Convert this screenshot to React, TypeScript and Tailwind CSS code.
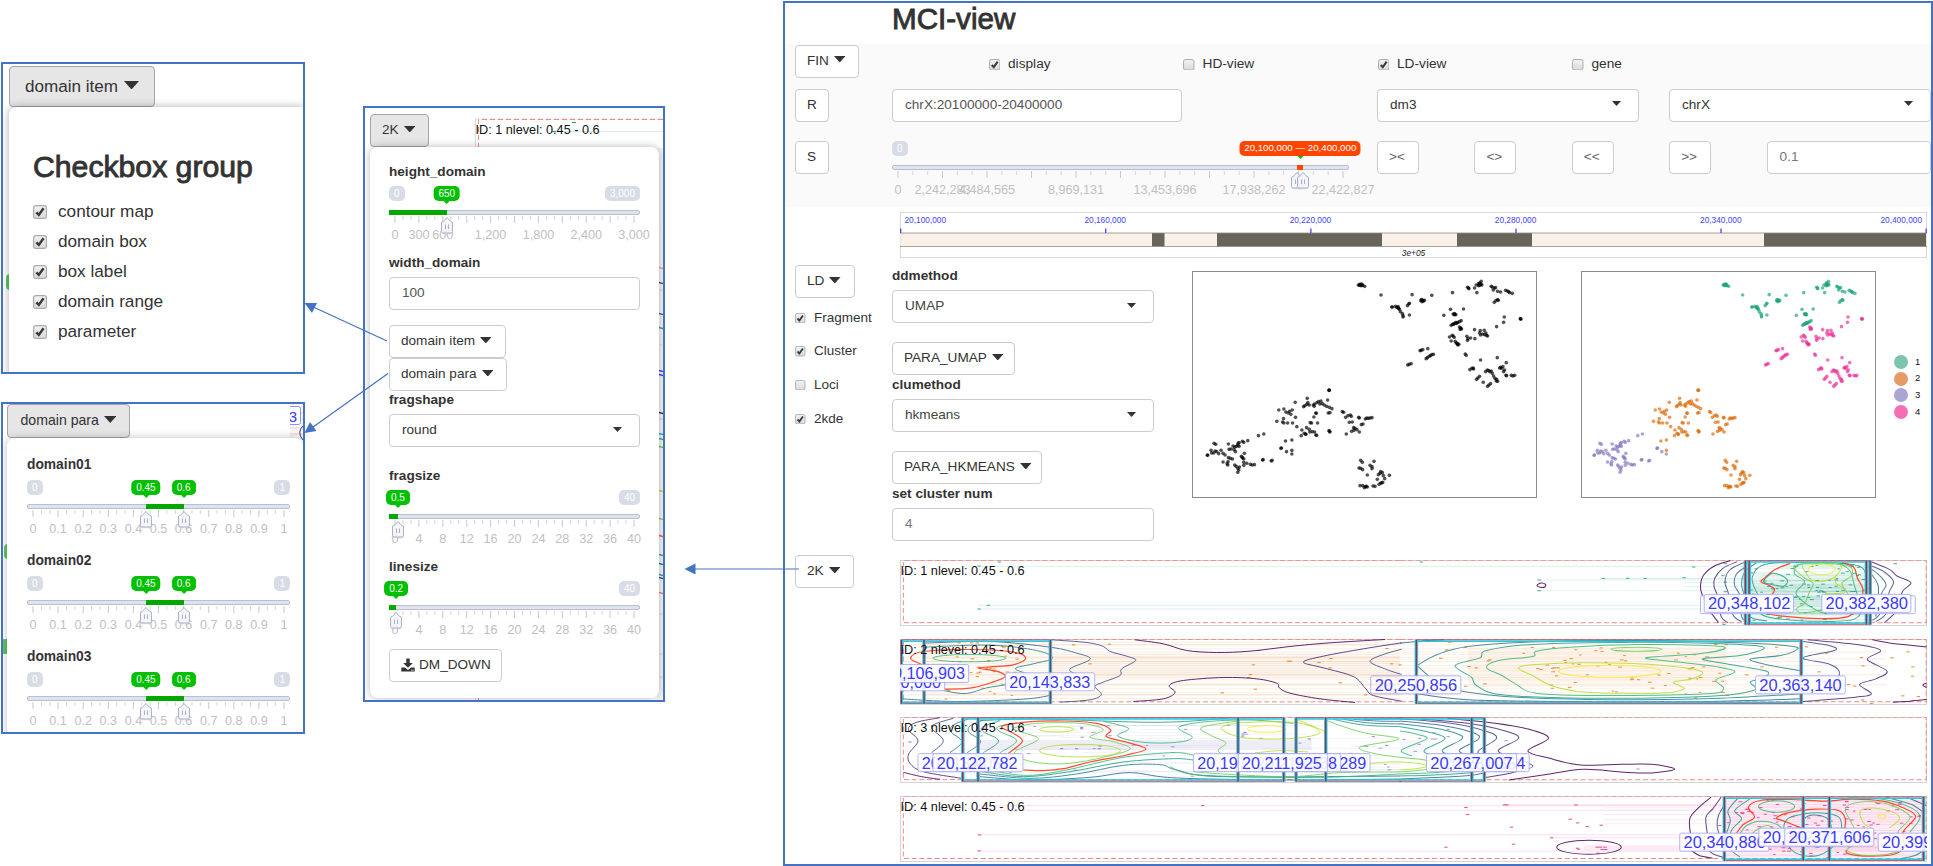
import React from "react";

type Pt = [number, number];

/* ---------- helpers ---------- */

const parse = (s: string): Pt[] =>
  s.trim().split(/\s+/).map((p) => p.split(",").map(Number) as Pt);

/* Catmull-Rom spline through the points */
function spline(s: string, closed = false): string {
  const p = parse(s);
  const n = p.length;
  const at = (i: number): Pt => (closed ? p[(i + n) % n] : p[Math.max(0, Math.min(n - 1, i))]);
  let d = `M${p[0][0]},${p[0][1]}`;
  for (let i = 0; i < (closed ? n : n - 1); i++) {
    const a = at(i - 1), b = at(i), c = at(i + 1), e = at(i + 2);
    d += `C${b[0] + (c[0] - a[0]) / 6},${b[1] + (c[1] - a[1]) / 6} ${c[0] - (e[0] - b[0]) / 6},${c[1] - (e[1] - b[1]) / 6} ${c[0]},${c[1]}`;
  }
  return closed ? d + "Z" : d;
}

function rng(seed: number) {
  let s = seed;
  return () => {
    s = (s * 16807) % 2147483647;
    return s / 2147483647;
  };
}

/* ---------- form parts ---------- */

function Caret({ w = 11.5, h = 6.5 }: { w?: number; h?: number }) {
  return (
    <svg width={w} height={h} viewBox="0 0 12 7" preserveAspectRatio="none" className="shrink-0">
      <path d="M0 0H12L6 7Z" fill="#333" />
    </svg>
  );
}

function Btn({ className = "", children, caret = false }: { className?: string; children: React.ReactNode; caret?: boolean }) {
  return (
    <button className={`flex h-[33px] shrink-0 items-center gap-[5px] rounded-[4px] border border-[#ccc] bg-white pl-[11px] text-[13.6px] whitespace-nowrap text-[#333] ${className}`}>
      <span>{children}</span>
      {caret && <span className="-mt-[3px] flex"><Caret /></span>}
    </button>
  );
}

function Field({ className = "", children, caret = false }: { className?: string; children: React.ReactNode; caret?: boolean }) {
  return (
    <div className={`flex h-[33px] shrink-0 items-center justify-between rounded-[4px] border border-[#ccc] bg-white pr-[17px] pl-[12px] text-[13.6px] ${className}`}>
      <span>{children}</span>
      {caret && <span className="-mt-[3px] flex"><Caret w={9} h={5} /></span>}
    </div>
  );
}

function Check({ on, size }: { on: boolean; size: number }) {
  return (
    <svg width={size} height={size} viewBox="0 0 13 13" className="shrink-0">
      <defs>
        <linearGradient id="cb" x1="0" y1="0" x2="0" y2="1">
          <stop offset="0" stopColor="#f2f2f2" />
          <stop offset="1" stopColor="#dadada" />
        </linearGradient>
      </defs>
      <rect x="0.6" y="0.6" width="11.8" height="11.8" rx="2" fill="url(#cb)" stroke="#acacac" strokeWidth="1.1" />
      {on && <path d="M3.1 6.8L5.4 9.2L9.8 3" fill="none" stroke="#3a3a3a" strokeWidth="2.3" />}
    </svg>
  );
}

interface SliderProps {
  width: number;
  max: string | null;
  min?: string | null;
  divisions: number;
  minor: number;
  labels: [number, string][];
  from?: number;
  to: number;
  bubbles: [number, string][];
  handles: number[];
  range?: boolean;
}

/* Range slider; every position is a fraction of the scale between the two end ticks */
function Slider({ width, max, min = "0", divisions, minor, labels, from = 0, to, bubbles, handles, range = false }: SliderProps) {
  const inset = 6;
  const px = (f: number) => inset + f * (width - inset * 2);
  const total = divisions * minor;
  const start = from === 0 ? 0 : px(from);
  const badge = "flex h-[15px] items-center rounded-[5px] bg-[#d8dce6] px-[5px] text-[10px] text-white";
  return (
    <div className="relative h-[58px] shrink-0" style={{ width }}>
      <div className="flex h-[15px] justify-between">
        <span className={min === null ? "invisible" : badge}>{min}</span>
        {max !== null && <span className={badge}>{max}</span>}
      </div>
      <div className="mt-[9px] h-[5px] overflow-hidden rounded-[2px] border border-[#b9c0d2] bg-[#dfe3ee]" />
      <div className={`absolute top-[24px] h-[5px] ${range ? "bg-[#ff4500]" : "bg-[#00a800]"}`} style={{ left: start, width: px(to) - start }} />
      <svg className="absolute top-[29px] left-0" width={width} height="9">
        {Array.from({ length: total + 1 }, (_, i) => {
          const major = i % minor === 0;
          return <rect key={i} x={px(i / total) - 0.5} y="1" width="1" height={major ? 7 : 4} fill={major ? "#c8c8c8" : "#d5d5d5"} />;
        })}
      </svg>
      {labels.map(([f, t]) => (
        <span key={t} className="absolute top-[41px] -translate-x-1/2 text-[12.6px] leading-[16px] text-[#c0c0c0]" style={{ left: px(f) }}>{t}</span>
      ))}
      {bubbles.map(([f, t]) => (
        <span key={t} className={`absolute top-0 flex h-[15px] -translate-x-1/2 items-center rounded-[5px] whitespace-nowrap text-white ${range ? "bg-[#ff4500] px-[4.5px] text-[9.7px]" : "bg-[#00c000] px-[5px] text-[10px]"}`} style={{ left: px(f) }}>
          {t}
          <svg className="absolute top-[15px] left-1/2 -translate-x-1/2" width="6" height="3"><path d="M0 0H6L3 3Z" fill="#00c000" /></svg>
        </span>
      ))}
      {handles.map((f) => (
        <svg key={f} className="absolute top-[30px] -translate-x-1/2" style={{ left: px(f) }} width="14" height="20" viewBox="0 0 14 20">
          <path d="M7 1.5L3.3 5.5H2.8Q1.5 5.5 1.5 7V15.5Q1.5 17 3 17H11Q12.5 17 12.5 15.5V7Q12.5 5.5 11.2 5.5H10.7Z" fill="#f3f3f8" fillOpacity="0.88" stroke="#a9b2c9" strokeWidth="1" />
          <path d="M2.5 17.7H11.5" stroke="#c9c9cf" strokeWidth="1" />
          <path d="M5.5 8.5V13M8.5 8.5V13" stroke="#a9b2c9" strokeWidth="1" />
        </svg>
      ))}
    </div>
  );
}

/* ---------- scatter plots ---------- */

const CLUSTERS: { fill: string; pts: string }[] = [
  { fill: "#1ba37c", pts: "565,90 570,88 575,87 578,91 584,94 568,91 573,92 571,89 576,90 633,120 665,156 667,156 676,154 680,157 684,159 684,155 688,163 686,160 691,170 697,176 699,186 699,182 712,152 716,147 718,145 718,180 726,119 752,137 757,135 760,138 756,140 763,136 754,134 758,137 785,121 847,113 892,97 895,99 896,101 913,99 918,90 925,86 928,84 933,79 932,87 929,91 935,90 925,92 929,88 920,113 963,94 966,96 972,99 976,98 969,105 982,109 991,111 1006,106 1011,108 1015,110 1018,113 1026,115 972,142 977,137 982,134 984,136 841,163 880,162 821,181 849,177 854,178 857,179 853,176 852,179 843,211 847,208 852,206 856,203 860,204 863,202 868,200 873,197 850,208 858,205" },
  { fill: "#db6a08", pts: "478,405 477,406 478,406 376,442 412,430 327,465 342,462 348,471 355,474 359,469 363,478 367,465 377,487 321,499 338,501 341,491 342,504 353,504 368,504 381,515 401,455 405,452 411,448 414,443 418,450 430,450 433,454 434,447 441,443 446,440 450,447 453,438 457,446 463,450 473,435 470,454 478,457 486,461 475,474 480,473 438,474 439,475 432,486 421,503 425,504 443,504 394,542 396,525 403,535 408,538 407,537 410,518 418,523 420,531 427,530 434,531 438,540 440,541 477,527 480,531 479,529 517,470 521,472 527,487 534,482 541,480 544,484 538,502 547,501 566,487 568,489 586,492 590,489 595,490 600,489 606,488 574,509 579,507 568,531 561,524 555,520 551,518 552,526 545,529 529,537 347,558 366,555 366,586 572,616 577,622 567,639 572,640 578,644 592,660 600,631 606,635 606,641 612,619 622,673 625,659 630,655 632,650 637,653 640,662 644,671 658,661 638,682 632,684 627,688 615,694 609,693 592,696 586,695 583,698 578,692 570,692 635,684 589,694" },
  { fill: "#837abf", pts: "266,542 282,537 234,557 133,565 138,568 176,567 124,586 126,594 132,594 136,588 141,590 147,596 154,586 160,595 166,600 113,601 114,600 178,583 184,582 190,573 195,576 197,590 204,571 205,565 208,563 208,574 218,559 222,562 193,584 200,574 160,621 172,626 175,620 176,608 182,610 188,612 174,630 195,630 199,634 204,640 207,645 204,652 209,636 215,604 219,609 222,612 217,607 224,595 222,622 222,631 231,625 242,628 247,630 254,629 278,615 280,614 304,618 307,616 333,580 335,579 350,590 366,597" },
  { fill: "#ec2f98", pts: "868,216 872,220 874,222 870,223 871,219 838,246 846,241 849,243 852,247 843,258 855,259 858,264 862,267 866,268 863,270 861,265 890,244 893,251 892,256 901,249 914,251 913,224 930,227 928,234 931,240 937,237 942,226 943,239 947,234 949,241 952,243 979,215 1000,202 1002,186 1052,192 1050,191 1051,192 750,287 753,286 758,284 773,281 768,311 772,308 777,304 781,302 785,299 790,298 713,330 717,328 723,326 885,297 888,301 931,315 981,308 1008,323 899,344 905,340 909,339 910,342 919,373 923,369 928,364 939,382 952,394 956,390 961,386 946,350 951,345 955,347 959,350 963,348 966,355 970,363 974,370 979,373 978,378 982,379 988,339 991,337 994,340 998,335 1000,350 1003,345 1007,361 1009,362 1023,361 1028,363 1033,361" },
];

function Scatter({ width, colored }: { width: number; colored: boolean }) {
  return (
    <svg width={width} height="227" className="shrink-0">
      <rect x="0.5" y="0.5" width={width - 1} height="226" fill="white" stroke="#8a8a8a" />
      {CLUSTERS.map((c) =>
        parse(c.pts).map(([x, y], i) => (
          <circle key={c.fill + i} cx={((x - 67) / 1033) * width} cy={(y - 48) / 3} r="1.8" fill={colored ? c.fill : "#000"} fillOpacity="0.68" />
        )),
      )}
    </svg>
  );
}

/* ---------- contour strips ---------- */

const V = ["#440154", "#482878", "#3e4a89", "#31688e", "#26828e", "#1f9e89", "#35b779", "#6dcd59", "#b4de2c", "#fde725"];
const RED = "#ff2d0a";

function C({ c, p, closed }: { c: string; p: string; closed?: boolean }) {
  return <path d={spline(p, closed)} fill="none" stroke={c} strokeWidth={c === RED ? 3.6 : 3} strokeOpacity="0.85" />;
}
function E({ c, x, y, rx, ry }: { c: string; x: number; y: number; rx: number; ry: number }) {
  return <ellipse cx={x} cy={y} rx={rx} ry={ry} fill="none" stroke={c} strokeWidth="3" strokeOpacity="0.85" />;
}
function Edge({ x, y }: { x: number; y: number }) {
  return (
    <>
      <rect x={x - 5} y={y} width="10.5" height="192" fill="#1fd3ea" />
      <rect x={x - 2} y={y} width="4.2" height="192" fill="#b8233f" />
    </>
  );
}
/* Highlighted domain from a to b; edges lists every vertical line drawn */
function Box({ a, b, y, edges }: { a: number; b: number; y: number; edges?: number[] }) {
  return (
    <>
      <path d={`M${a},${y + 5}H${b}M${a},${y + 188}H${b}`} stroke="#14d2e6" strokeWidth="4.5" />
      <path d={`M${a},${y + 1}H${b}M${a},${y + 192}H${b}`} stroke="#c43a5c" strokeWidth="2.5" />
      {(edges ?? [a, b]).map((x) => <Edge key={x} x={x} y={y + 1} />)}
    </>
  );
}
function Tag({ x, w, y, text, end }: { x: number; w: number; y: number; text: string; end?: boolean }) {
  return (
    <>
      <rect x={x} y={y} width={w} height="54" rx="5" fill="white" fillOpacity="0.88" stroke="#a3a3ff" strokeWidth="2.5" />
      {text && <text x={end ? x + w - 11 : x + 11} y={y + 45} textAnchor={end ? "end" : "start"} fontSize="48.5" fill="#3b3bff">{text}</text>}
    </>
  );
}
/* Fragment marks with the faint guide line that runs through each */
function Marks({ seed, n, x0, x1, y0, y1, color, line = 0, tail = 300 }: { seed: number; n: number; x0: number; x1: number; y0: number; y1: number; color: string; line?: number; tail?: number }) {
  const r = rng(seed);
  return (
    <>
      {Array.from({ length: n }, (_, i) => {
        const x = x0 + r() * (x1 - x0);
        const y = y0 + r() * (y1 - y0);
        const l = r() * tail;
        return (
          <g key={i} fill={color}>
            {line > 0 && <rect x={Math.max(x0, x - l)} y={y - 1} width={Math.min(x1, x + l) - Math.max(x0, x - l)} height="2.6" fillOpacity={line} />}
            <rect x={x} y={y - 1.5} width={7 + r() * 5} height="3" fillOpacity="0.8" />
          </g>
        );
      })}
    </>
  );
}
function Dots({ p, color }: { p: string; color: string }) {
  return <>{parse(p).map(([x, y], i) => <rect key={i} x={x - 5} y={y - 1.5} width="10" height="3.2" fill={color} fillOpacity="0.8" />)}</>;
}
function Rows({ ys, x0, x1, color, o }: { ys: number[]; x0: number; x1: number; color: string; o: number }) {
  return <>{ys.map((y) => <rect key={y} x={x0} y={y - 1.5} width={x1 - x0} height="3" fill={color} fillOpacity={o} />)}</>;
}

function Strip({ id, top, left, right }: { id: number; top: number; left: React.ReactNode; right: React.ReactNode }) {
  const dy = 550 - top;
  return (
    <svg width="1027" height="66" className="block shrink-0 overflow-hidden">
      <rect x="0.5" y="0.5" width="1026" height="65" fill="white" stroke="#d4d4d4" />
      <g transform={`translate(500 ${dy}) scale(0.3399 0.33333)`}>{right}</g>
      <g transform={`translate(-10 ${dy}) scale(0.33333)`}>{left}</g>
      <text x="0.5" y="15" fontSize="12.7" fill="#111">ID: {id} nlevel: 0.45 - 0.6</text>
    </svg>
  );
}
function Dash({ y, side }: { y: number; side: "l" | "r" }) {
  return side === "l" ? (
    <path d={`M1530,${y}H40V${y + 187}H1530`} fill="none" stroke="#f08a84" strokeWidth="3" strokeDasharray="15 8" />
  ) : (
    <path d={`M0,${y}H1548V${y + 187}H0`} fill="none" stroke="#f08a84" strokeWidth="3" strokeDasharray="15 8" />
  );
}

const GREEN = "#1b9e77", ORANGE = "#e07b1a", LILAC = "#8f88c8", PINK = "#e7298a";

function Strips() {
  return (
    <div className="flex flex-col gap-[12.5px]">
      <Strip id={1} top={560}
        left={<>
          <Rows ys={[49]} x0={265} x1={1530} color={GREEN} o={0.14} />
          <Rows ys={[166, 177]} x0={265} x1={1530} color={GREEN} o={0.14} />
          <Dots p="328,36 267,48 295,166 267,177" color={GREEN} />
          <Dash y={31} side="l" />
        </>}
        right={<>
          <Rows ys={[49, 166, 177]} x0={0} x1={1020} color={GREEN} o={0.14} />
          <Rows ys={[90, 122]} x0={409} x1={1020} color={GREEN} o={0.12} />
          <Rows ys={[86]} x0={598} x1={1020} color={GREEN} o={0.2} />
          <Rows ys={[98, 110]} x0={836} x1={1020} color={GREEN} o={0.14} />
          <rect x="1020" y="75" width="360" height="125" fill={GREEN} fillOpacity="0.1" />
          <Marks seed={77} n={110} x0={1025} x1={1385} y0={45} y1={212} color={GREEN} line={0.09} tail={300} />
          <Dots p="63,36 409,90 409,122 598,85 670,85 721,85 836,83 864,51 957,41 950,77 957,96 957,125 1457,41 953,223" color={GREEN} />
          <Dash y={31} side="r" />
          <C c={V[0]} closed p="403,106 415,99 428,103 426,111 413,112" />
          <C c={V[0]} p="972,32 925,48 893,76 884,110 890,137 905,175 920,195 937,218" />
          <C c={V[1]} p="992,35 950,55 926,85 924,110 935,140 945,200 965,218" />
          <C c={V[2]} p="1012,37 970,60 956,95 966,130 980,195 1005,215" />
          <C c={V[3]} p="1018,50 990,72 984,105 1000,137 1005,200 1020,212" />
          <C c={V[4]} p="1050,38 1015,65 1005,105 1018,150 1030,200 1080,213" />
          <C c={V[1]} p="1388,36 1440,58 1462,78 1503,98 1478,125 1462,180 1445,200 1425,218" />
          <C c={V[2]} p="1388,48 1425,66 1452,95 1438,130 1430,190 1400,215" />
          <C c={V[3]} p="1388,58 1414,80 1430,105 1415,135 1412,190 1392,210" />
          <C c={V[3]} p="1388,74 1402,95 1408,120 1400,200" />
          <C c={V[5]} closed p="1080,42 1037,80 1048,125 1070,160 1060,190 1110,206 1240,214 1340,206 1368,150 1372,90 1350,48 1240,38" />
          <C c={RED} p="1148,40 1105,58 1075,82 1062,95 1085,106 1102,120 1085,150 1080,188 1140,200 1240,206 1318,200 1350,165 1362,120 1346,85 1335,52 1300,38" />
          <C c={V[6]} closed p="1180,42 1160,70 1190,95 1165,130 1200,165 1250,190 1310,180 1345,150 1335,100 1322,60 1280,40" />
          <C c={V[7]} closed p="1165,45 1185,80 1215,100 1205,125 1190,160 1165,178 1195,188 1290,165 1318,135 1300,100 1330,75 1310,45" />
          <C c={V[5]} closed p="1095,70 1070,95 1100,105 1130,108 1140,92 1125,78" />
          <C c={V[8]} closed p="1190,40 1195,70 1215,92 1260,90 1290,70 1290,42" />
          <C c={V[8]} p="1280,80 1283,100 1310,120 1300,130 1250,130" />
          <E c={V[9]} x={1241} y={58} rx={39} ry={16} />
          <Box a={1016} b={1383} y={31} edges={[1016, 1027, 1372, 1383]} />
          <Tag x={884} w={264} y={137} text="" />
          <Tag x={895} w={263} y={133} text="20,348,102" />
          <Tag x={1253} w={263} y={137} text="" />
          <Tag x={1241} w={262} y={133} text="20,382,380" />
        </>}
      />
      <Strip id={2} top={638.5}
        left={<>
          <rect x="485" y="310" width="1045" height="70" fill={ORANGE} fillOpacity="0.05" />
          <Rows ys={[275, 283, 295, 305, 311, 320, 325, 333, 339, 345, 353, 361, 367, 373, 381, 388, 398, 403, 415, 427, 433, 444]} x0={100} x1={1530} color={ORANGE} o={0.13} />
          <Rows ys={[283, 320, 333, 373, 403, 433]} x0={40} x1={1530} color={ORANGE} o={0.14} />
          <Marks seed={31} n={34} x0={150} x1={390} y0={275} y1={450} color={ORANGE} />
          <Dots p="207,277 245,277 262,277 551,283 658,281 600,340 1107,300 1090,343 1195,332 1202,332 1323,324 1287,336 1320,352 1082,372 1076,381 1096,416 997,427 1351,397 1427,433 1491,294 1505,340 1530,343 265,350 270,365 262,378 575,451 585,451" color={ORANGE} />
          <Dash y={267} side="l" />
          <E c={V[6]} x={238} y={323} rx={110} ry={11} />
          <C c={RED} p="165,416 240,413 305,396 346,378 320,362 266,353 300,349 370,343 407,323 370,305 240,297 100,303 62,323 95,342" />
          <C c={V[4]} p="100,405 170,422 230,429 290,412 350,402 430,380 376,355 430,340 487,323 440,300 300,284 100,290" />
          <C c={V[3]} p="35,445 200,453 400,446 480,435" />
          <C c={V[3]} p="102,278 300,273 480,290 560,308 601,326 540,355 560,372" />
          <C c={V[2]} p="485,268 590,276 640,288 660,303 710,317 737,330 695,355 690,375 640,395 615,408 634,432 600,448 510,455" />
          <C c={V[0]} p="735,268 820,280 890,300 980,306 1080,302 1200,288 1320,277 1485,267" />
          <C c={V[0]} p="730,453 820,445 855,426 838,405 880,390 1000,381 1100,385 1160,398 1168,412 1200,428 1290,445 1395,456" />
          <C c={V[1]} p="1535,277 1420,295 1300,317 1240,335 1300,352 1390,378 1425,412 1450,435 1535,452" />
          <C c={V[2]} p="1535,296 1480,312 1440,333 1490,357 1535,372" />
          <Box a={34} b={481} y={267} edges={[34, 102, 481]} />
          <Tag x={-110} w={274} y={367} text="20,100,000" end />
          <Tag x={-30} w={266} y={342} text="20,106,903" end />
          <Tag x={347} w={267} y={367} text="20,143,833" />
        </>}
        right={<>
          <rect x="200" y="290" width="760" height="120" fill={ORANGE} fillOpacity="0.07" />
          <Rows ys={[275, 283, 295, 305, 311, 320, 325, 333, 345, 353, 361, 373, 381, 388, 403, 415, 427, 433]} x0={0} x1={1180} color={ORANGE} o={0.12} />
          <Rows ys={[283, 305, 325, 345, 373, 403]} x0={1180} x1={1430} color={ORANGE} o={0.14} />
          <Marks seed={9} n={60} x0={360} x1={960} y0={280} y1={435} color={ORANGE} />
          <Dots p="146,275 193,290 137,298 120,323 265,328 260,331 203,348 224,352 405,354 415,357 250,400 193,407 455,352 465,352 1108,290 1196,289 1255,308 1358,321 1448,322 1495,304 1509,349 1508,377 1362,346 1233,364 1065,349 1020,373 1320,402 1338,407 1525,438 1479,436 1387,459 1361,448 870,442 950,426" color={ORANGE} />
          <Dash y={267} side="r" />
          <C c={V[3]} p="0,278 60,272 130,268" />
          <C c={V[4]} p="50,345 110,312 200,288 400,274 700,270 1000,277 1150,287 1168,297 1120,315 1030,326 1090,345 1180,361" />
          <C c={V[4]} p="50,345 95,385 150,415 300,437 550,447 900,445 1180,430" />
          <C c={V[3]} p="50,430 200,448 500,453 900,453 1180,445" />
          <C c={V[5]} closed p="162,345 235,322 255,300 400,281 700,275 900,278 1040,285 1070,295 1000,315 890,325 960,340 1080,363 1060,385 1030,395 1040,420 900,438 550,443 300,433 225,405 210,380" />
          <C c={V[6]} closed p="255,352 290,330 390,318 402,302 500,290 700,282 900,285 957,293 880,310 722,322 850,338 940,350 985,365 930,388 952,415 900,430 600,435 400,428 340,400 300,375" />
          <C c={V[8]} closed p="348,352 400,342 550,337 750,343 885,362 860,385 805,395 835,415 760,428 550,425 450,407 390,375" />
          <E c={V[7]} x={695} y={296} rx={75} ry={6} />
          <E c={V[9]} x={617} y={362} rx={150} ry={18} />
          <C c={V[2]} p="1180,272 1265,286 1278,300 1185,322 1260,340 1292,362 1285,395" />
          <C c={V[1]} p="1200,268 1350,283 1414,300 1375,327 1433,362 1400,385 1352,402 1387,430 1340,440 1185,453" />
          <C c={V[0]} p="1390,268 1450,279 1549,289" />
          <C c={V[0]} p="1549,397 1538,404 1549,411" />
          <C c={V[0]} p="1450,455 1500,452 1549,447" />
          <Box a={48} b={1180} y={267} />
          <Tag x={-86} w={265} y={376} text="20,250,856" end />
          <Tag x={1046} w={264} y={376} text="20,363,140" />
        </>}
      />
      <Strip id={3} top={717}
        left={<>
          <rect x="265" y="570" width="1000" height="30" fill={LILAC} fillOpacity="0.14" />
          <Marks seed={55} n={46} x0={270} x1={1530} y0={520} y1={680} color={LILAC} line={0.12} tail={450} />
          <Dots p="60,576 575,532 575,536 515,596 630,588 628,596 560,596 1065,547 1060,552 1058,558 1258,567 1262,620 1490,586 1450,560" color="#7570b3" />
          <Dash y={502} side="l" />
          <C c={V[0]} p="40,667 95,680 150,688" />
          <C c={V[1]} p="150,503 80,517 55,538 84,572 56,612 60,640 100,665 215,685" />
          <C c={V[2]} p="190,505 140,520 125,535 160,572 125,608" />
          <C c={V[3]} p="235,507 190,525 182,545 216,575 180,608" />
          <C c={V[4]} p="280,510 240,528 238,548 272,575 232,608" />
          <C c={V[5]} p="330,512 280,530 280,545 326,573 280,608" />
          <C c={V[6]} p="380,520 325,530 330,545 380,572 330,608" />
          <C c={RED} p="355,610 397,574 370,550 335,530 400,517 520,513 620,520 662,540 650,560 715,578 768,597 710,615 600,636 520,656 460,662 400,660" />
          <C c={V[7]} closed p="372,535 440,520 570,520 640,538 600,562 670,575 720,597 640,622 540,640 460,640 400,628 375,605 445,568 400,548" />
          <E c={V[8]} x={570} y={602} rx={122} ry={19} />
          <E c={V[8]} x={500} y={538} rx={52} ry={8} />
          <C c={V[6]} p="640,514 716,535 683,558 760,577 860,577 907,562 866,533 940,516 1080,510 1210,520" />
          <C c={V[7]} p="1044,513 935,532 960,555 1007,578 985,600 1000,618" />
          <C c={V[8]} closed p="993,535 1060,518 1220,518 1290,548 1200,566 1060,563" />
          <E c={V[9]} x={1130} y={537} rx={58} ry={10} />
          <C c={V[8]} p="1095,609 1170,602 1255,606" />
          <C c={V[5]} p="270,512 450,507 800,517 1010,505" />
          <C c={V[6]} p="270,655 400,676 520,662 700,622 850,608 910,615" />
          <C c={V[5]} p="270,664 400,680 540,665 700,636 850,626 910,630" />
          <C c={V[4]} p="270,672 420,685 560,672 700,646 810,644 860,660 1000,680 1530,678" />
          <C c={V[3]} p="270,680 420,690 600,682 720,668 860,684 1200,690 1530,687" />
          <C c={V[7]} p="910,665 1000,672 1200,680 1350,668 1530,666" />
          <C c={V[6]} p="840,650 900,672 1050,680 1300,682 1530,672" />
          <C c={V[8]} p="1440,640 1500,636 1530,636" />
          {[0, 1, 2, 3].map((i) => <C key={i} c={V[2 + i]} p={`${1420 - i * 30},508 ${1480 - i * 20},${507 + i * 6} 1530,${506 + i * 8}`} />)}
          <C c={V[7]} p="1307,510 1360,530 1430,550 1527,567 1410,591 1450,610 1530,622" />
          <C c={V[8]} p="1225,510 1260,525 1307,545" />
          <Box a={218} b={1181} y={502} edges={[218, 264, 1044, 1181]} />
          <Box a={1218} b={1534} y={502} edges={[1218, 1307]} />
          <Tag x={84} w={266} y={611} text="20,118,405" />
          <Tag x={129} w={270} y={611} text="20,122,782" />
          <Tag x={911} w={268} y={611} text="20,197,040" />
          <Tag x={1172} w={268} y={611} text="20,224,289" end />
          <Tag x={1084} w={268} y={611} text="20,215,838" end />
          <Tag x={1045} w={268} y={611} text="20,211,925" />
        </>}
        right={<>
          <rect x="0" y="570" width="80" height="40" fill={LILAC} fillOpacity="0.08" />
          <Dots p="142,538 100,548 58,565 12,568 95,567 105,567 142,560 56,583 45,604 312,572 700,657" color={LILAC} />
          <Dash y={502} side="r" />
          <C c={V[0]} p="140,505 280,520 380,538 437,565 376,603 440,625 530,645 650,643 740,643 808,657 740,669 650,666 540,658 420,675 320,690" />
          <C c={V[1]} p="60,507 200,520 310,543 349,565 290,600 320,618 391,648 330,668 250,683" />
          <C c={V[2]} p="0,506 150,520 250,543 284,565 230,603 250,620" />
          <C c={V[3]} p="0,513 120,526 215,548 231,567 175,600 200,617" />
          <C c={V[4]} p="0,521 100,534 165,550 182,567 125,600 150,617" />
          <C c={V[5]} p="0,530 70,543 133,565 72,600 90,615" />
          <C c={V[6]} p="0,543 50,553 78,567 5,600 35,618" />
          <C c={V[8]} p="0,636 60,641 78,650 40,657 0,660" />
          <C c={V[7]} p="0,622 60,628 100,640 80,658 0,666" />
          <C c={V[6]} p="0,672 100,668 210,660" />
          <C c={V[5]} p="0,678 100,675 210,668" />
          <C c={V[3]} p="0,687 120,682 210,676 250,668" />
          <Box a={-2} b={248} y={502} edges={[211, 248]} />
          <Tag x={116} w={264} y={611} text="20,281,354" end />
          <Tag x={78} w={265} y={611} text="20,267,007" />
        </>}
      />
      <Strip id={4} top={795.5}
        left={<>
          <Rows ys={[766, 779, 853, 902]} x0={267} x1={1530} color={PINK} o={0.16} />
          <Dots p="69,766 267,778 268,853 267,901 938,765" color={PINK} />
          <Dash y={737} side="l" />
        </>}
        right={<>
          <Rows ys={[766, 779, 853, 902]} x0={0} x1={955} color={PINK} o={0.16} />
          <Rows ys={[763]} x0={307} x1={955} color={PINK} o={0.16} />
          <Rows ys={[862]} x0={446} x1={955} color={PINK} o={0.16} />
          <Rows ys={[772, 792, 808, 820]} x0={600} x1={955} color={PINK} o={0.1} />
          <rect x="540" y="884" width="1000" height="16" fill={PINK} fillOpacity="0.09" />
          <rect x="958" y="745" width="580" height="180" fill={PINK} fillOpacity="0.09" />
          <Rows ys={[752, 762, 770, 779, 786, 792, 800, 808, 814, 822, 840, 862, 890, 902, 914]} x0={958} x1={1540} color={PINK} o={0.1} />
          <Marks seed={21} n={120} x0={960} x1={1535} y0={748} y1={922} color={PINK} />
          <Dots p="194,771 199,792 307,763 315,763 518,763 328,830 501,806 522,817 551,828 592,824 446,862 334,881 135,890 522,893 525,896 580,890 590,890 603,890 595,897 605,897 582,908 940,825" color={PINK} />
          <Dash y={737} side="r" />
          <E c={V[0]} x={556} y={890} rx={95} ry={21} />
          <C c={V[0]} p="915,740 880,770 853,803 854,848" />
          <C c={V[0]} p="855,898 880,915 920,923" />
          <C c={V[1]} p="945,740 920,775 900,800 904,848" />
          <C c={V[1]} p="905,898 925,912 950,920" />
          <C c={V[2]} p="955,762 937,795 933,825 938,848" />
          <C c={V[4]} p="995,742 965,780 972,810 960,850" />
          <C c={V[5]} p="1030,745 985,780 1005,805 975,840 968,890 1000,920" />
          <C c={RED} p="990,848 1010,822 1043,800 1025,770 1060,750 1150,747 1250,752 1330,746 1420,752 1480,772 1517,798 1480,845 1483,890 1450,912 1380,917 1320,910 1312,898" />
          <C c={RED} p="1190,836 1130,812 1108,802 1150,785 1220,776 1290,780 1310,805 1308,836" />
          <E c={V[6]} x={1108} y={768} rx={53} ry={17} />
          <C c={V[6]} p="1000,850 1020,825 1060,812 1110,822 1130,845" />
          <C c={V[7]} p="1015,900 1035,850 1080,825 1110,845" />
          <C c={V[5]} closed p="1140,805 1190,790 1250,788 1295,805 1290,870 1230,915 1160,905 1130,850" />
          <C c={V[4]} closed p="1190,805 1227,794 1262,810 1268,860 1227,890 1185,860" />
          <C c={V[7]} closed p="1310,775 1350,755 1430,760 1500,798 1465,845 1470,900 1380,915 1315,900 1350,870 1330,820" />
          <C c={V[8]} p="1390,835 1362,815 1355,780 1400,773 1450,785 1470,805 1440,832" />
          <C c={V[6]} p="1320,742 1420,746 1500,770 1530,800 1500,845" />
          <C c={V[4]} p="1430,740 1500,760 1540,785" />
          <C c={V[2]} p="1490,740 1548,765" />
          <C c={V[4]} p="1540,900 1515,915 1470,925" />
          <E c={V[9]} x={1418} y={798} rx={12} ry={6} />
          <Box a={954} b={1540} y={738} edges={[954, 1186, 1263, 1540]} />
          <Tag x={823} w={262} y={848} text="20,340,880" />
          <Tag x={1407} w={264} y={848} text="20,399,120" />
          <Tag x={1056} w={262} y={833} text="20,362,007" />
          <Tag x={1132} w={262} y={833} text="20,371,606" />
        </>}
      />
    </div>
  );
}

/* ---------- genome ruler ---------- */

function Ruler() {
  const dark = [[252, 12.5], [317, 165], [557, 75], [864, 162]];
  const marks = ["20,160,000", "20,220,000", "20,280,000", "20,340,000"];
  return (
    <svg width="1028" height="46" className="block">
      <rect x="0.5" y="0.5" width="1026" height="45" fill="white" stroke="#d9d9d9" />
      <rect x="0.5" y="21" width="1026" height="13.5" fill="#faf0e7" />
      {dark.map(([x, w]) => <rect key={x} x={x} y="21" width={w} height="13.5" fill="#666558" />)}
      <path d="M0 21H1027M0 34.5H1027" stroke="#8f8b85" strokeWidth="0.8" />
      <g fill="#4343f5" fontSize="8.3">
        <text x="4.5" y="10.7">20,100,000</text>
        {marks.map((t, i) => <text key={t} x={205.2 * (i + 1)} y="10.7" textAnchor="middle">{t}</text>)}
        <text x="1022" y="10.7" textAnchor="end">20,400,000</text>
        {[0, 1, 2, 3, 4, 5].map((i) => <rect key={i} x={i * 205.1} y="16.5" width="1.3" height="4.5" />)}
      </g>
      <text x="513.5" y="43.8" textAnchor="middle" fontSize="8.4" fontStyle="italic" fill="#222">3e+05</text>
    </svg>
  );
}

/* ---------- windows ---------- */

const FRAME = "shrink-0 overflow-hidden border-2 border-[#4472c4] bg-white";

function ItemWindow() {
  return (
    <section className={`${FRAME} relative ml-px h-[312px] w-[304px]`}>
      <span className="absolute top-[210px] left-[3px] h-4 w-3 rounded-[4px] bg-[#5fc75f]" />
      <div className="relative flex h-full flex-col pt-[2px] pl-[6px]">
        <button className="flex h-[41px] w-[146px] shrink-0 items-center gap-[6px] rounded-[4px] border border-[#a5a5a5] bg-[#e6e6e6] pl-[15px] text-[17.1px] text-[#333]">
          <span className="mt-px">domain item</span>
          <span className="-mt-[3px] flex"><Caret w={15} h={8.5} /></span>
        </button>
        <div className="h-[290px] shrink-0 rounded-tl-[8px] bg-white pt-[42px] pl-[24px] shadow-[0_0_9px_rgba(0,0,0,0.32)]">
          <h2 className="text-[30.2px] leading-[36px] text-[#333] [-webkit-text-stroke:0.9px_#333]">Checkbox group</h2>
          <div className="mt-[12px] flex flex-col">
            {["contour map", "domain box", "box label", "domain range", "parameter"].map((t) => (
              <label key={t} className="flex h-[30px] items-center gap-[11px] text-[17.2px] text-[#333]">
                <Check on size={14} />
                <span>{t}</span>
              </label>
            ))}
          </div>
        </div>
      </div>
    </section>
  );
}

function ParaWindow() {
  const labels: [number, string][] = [[0, "0"], [0.1, "0.1"], [0.2, "0.2"], [0.3, "0.3"], [0.4, "0.4"], [0.5, "0.5"], [0.6, "0.6"], [0.7, "0.7"], [0.8, "0.8"], [0.9, "0.9"], [1, "1"]];
  return (
    <section className={`${FRAME} relative mt-[28px] ml-px h-[332px] w-[304px]`}>
      <svg className="absolute top-0 left-[287px]" width="14" height="36">
        <rect width="14" height="36" fill="#f7f7f7" />
        <path d="M0 9H14M0 15H14M0 24H14M0 30H14" stroke="#f6cfc4" />
        <rect x="-8" y="2.5" width="18.5" height="18" rx="2" fill="white" stroke="#8d8dff" />
        <text x="-1.5" y="18" fontSize="15.5" fill="#3b3bff">3</text>
        <path d="M14 21Q6 28 13 36" fill="none" stroke="#482878" />
      </svg>
      <span className="absolute top-[140px] left-[1px] h-[15px] w-3 rounded-[4px] bg-[#5fc75f]" />
      <span className="absolute top-[235px] left-[-2px] h-[15px] w-3 rounded-[4px] bg-[#5fc75f]" />
      <div className="relative flex flex-col pl-[4px]">
        <button className="flex h-[34px] w-[123px] shrink-0 items-center gap-[5px] rounded-[4px] border border-[#a5a5a5] bg-[#e6e6e6] pl-[12.5px] text-[14.1px] text-[#333]">
          <span>domain para</span>
          <span className="-mt-[3px] flex"><Caret w={12.5} h={7} /></span>
        </button>
        <div className="flex h-[310px] shrink-0 flex-col rounded-tl-[8px] rounded-tr-[8px] bg-white pt-[18px] pl-[20px] shadow-[0_0_8px_rgba(0,0,0,0.25)]">
          {["domain01", "domain02", "domain03"].map((t) => (
            <div key={t} className="flex h-[96px] shrink-0 flex-col">
              <span className="mb-[6px] h-[18px] text-[13.8px] leading-[18px] font-bold text-[#333]">{t}</span>
              <Slider width={263} max="1" divisions={10} minor={3} labels={labels} from={0.45} to={0.6} bubbles={[[0.45, "0.45"], [0.6, "0.6"]]} handles={[0.45, 0.6]} />
            </div>
          ))}
        </div>
      </div>
    </section>
  );
}

const FORTY: [number, string][] = [[0, "0"], [0.1, "4"], [0.2, "8"], [0.3, "12"], [0.4, "16"], [0.5, "20"], [0.6, "24"], [0.7, "28"], [0.8, "32"], [0.9, "36"], [1, "40"]];

function KdeWindow() {
  const heading = "h-[18px] shrink-0 text-[13.6px] leading-[18px] font-bold text-[#333]";
  const slivers: [number, string][] = [[121, "#e3f3ee"], [159, "#f29a9a"], [174, "#6a4c93"], [181, "#f6d9c8"], [205, "#3e6fb0"], [219, "#5a86b8"], [236, "#f6d9c8"], [262, "#4343ff"], [266, "#4343ff"], [304, "#482878"], [310, "#d9d9e9"], [325, "#17b5d6"], [330, "#35b779"], [338, "#6dcd59"], [382, "#b4de2c"], [410, "#8fd060"], [427, "#ff5533"], [446, "#3aa88a"], [455, "#26828e"], [466, "#5b93c0"], [469, "#31688e"], [484, "#f08a84"], [505, "#fbd3e6"], [545, "#fbd3e6"], [568, "#fbd3e6"]];
  return (
    <section className={`${FRAME} relative mt-[106px] ml-[58px] h-[596px] w-[302px]`}>
      <svg className="absolute top-0 left-0" width="298" height="593">
        <path d="M110.5 592V11H298" fill="none" stroke="#dcdcdc" />
        <path d="M113.5 592V11.5H298" fill="none" stroke="#f08a84" strokeDasharray="5 3" />
        <path d="M200 23.5H298" stroke="#d5ece4" />
        <path d="M207 14.5H211M187 23.5H191" stroke="#1b9e77" />
        <text x="110.5" y="25.5" fontSize="12.7" fill="#111">ID: 1 nlevel: 0.45 - 0.6</text>
        <rect x="292" y="40" width="6" height="553" fill="#f3f3f3" />
        {slivers.map(([y, c]) => <path key={y} d={`M292 ${y}L298 ${y + 1.5}`} stroke={c} strokeWidth="1.3" />)}
      </svg>
      <div className="relative flex flex-col items-start pt-[6px] pl-[5px]">
        <Btn caret className="w-[59px] border-[#a5a5a5]! bg-[#e6e6e6]!">2K</Btn>
        <div className="flex h-[551px] w-[289px] flex-col items-start rounded-[8px] bg-white pl-[19px] shadow-[0_0_9px_rgba(0,0,0,0.28)]">
          <span className={`${heading} mt-[16px]`}>height_domain</span>
          <div className="mt-[5px]">
            <Slider width={251} max="3,000" divisions={10} minor={3} labels={[[0, "0"], [0.1, "300"], [0.2, "600"], [0.4, "1,200"], [0.6, "1,800"], [0.8, "2,400"], [1, "3,000"]]} to={0.2167} bubbles={[[0.2167, "650"]]} handles={[0.2167]} />
          </div>
          <span className={`${heading} mt-[10px]`}>width_domain</span>
          <Field className="mt-[5px] w-[251px] text-[#555]">100</Field>
          <Btn caret className="mt-[15px] w-[117px]">domain item</Btn>
          <Btn caret className="w-[118px]">domain para</Btn>
          <span className={`${heading}`}>fragshape</span>
          <Field caret className="mt-[5px] w-[251px] text-[#333]">round</Field>
          <span className={`${heading} mt-[20px]`}>fragsize</span>
          <div className="mt-[5px]">
            <Slider width={251} min={null} max="40" divisions={10} minor={3} labels={FORTY} to={0.0125} bubbles={[[0.0125, "0.5"]]} handles={[0.0125]} />
          </div>
          <span className={`${heading} mt-[10px]`}>linesize</span>
          <div className="mt-[5px]">
            <Slider width={251} min={null} max="40" divisions={10} minor={3} labels={FORTY} to={0.005} bubbles={[[0.005, "0.2"]]} handles={[0.005]} />
          </div>
          <Btn className="mt-[10px] w-[113px]">
            <span className="flex items-center gap-[4px]">
              <svg width="14" height="14" viewBox="0 0 14 14">
                <path d="M5.3 0.5H8.7V5H11.8L7 9.8L2.2 5H5.3Z" fill="#333" />
                <path d="M0.3 9.5H4L7 12L10 9.5H13.7V13.6H0.3Z" fill="#333" />
                <path d="M10 12.2H12.6" stroke="#fff" strokeWidth="0.7" />
              </svg>
              DM_DOWN
            </span>
          </Btn>
        </div>
      </div>
    </section>
  );
}

function MainWindow() {
  const label = "h-[20px] shrink-0 text-[13.6px] leading-[19px] font-bold text-[#333]";
  return (
    <section className={`${FRAME} mt-px ml-[118px] flex h-[865px] w-[1150px] flex-col`}>
      <h1 className="h-[41px] shrink-0 pl-[107px] text-[29.6px] leading-[31px] text-[#333] [-webkit-text-stroke:0.9px_#333]">MCI-view</h1>

      <div className="flex h-[163px] shrink-0 flex-col bg-[#fafafa] pt-[0.6px] pl-[10px]">
        <div className="flex h-[33px]">
          <div className="w-[193.5px]"><Btn caret className="w-[64px]">FIN</Btn></div>
          {([["display", true], ["HD-view", false], ["LD-view", true], ["gene", false]] as [string, boolean][]).map(([t, on]) => (
            <label key={t} className="flex w-[194.5px] items-center gap-[8px] pt-[7px] text-[13.7px] text-[#333]">
              <Check on={on} size={11.5} />
              <span>{t}</span>
            </label>
          ))}
        </div>
        <div className="mt-[11px] flex h-[33px]">
          <div className="w-[97px] shrink-0"><Btn className="w-[34px]">R</Btn></div>
          <Field className="w-[290px] text-[#555]">chrX:20100000-20400000</Field>
          <Field caret className="ml-[195px] w-[262px] text-[#333]">dm3</Field>
          <Field caret className="ml-[30px] w-[262px] text-[#333]">chrX</Field>
        </div>
        <div className="mt-[19px] flex h-[56px]">
          <div className="w-[97px] shrink-0"><Btn className="w-[34px]">S</Btn></div>
          <Slider range width={457} max={null} divisions={10} minor={3} from={0.896} to={0.911}
            labels={[[0, "0"], [0.1, "2,242,283"], [0.2, "4,484,565"], [0.4, "8,969,131"], [0.6, "13,453,696"], [0.8, "17,938,262"], [1, "22,422,827"]]}
            bubbles={[[0.904, "20,100,000 — 20,400,000"]]} handles={[0.896, 0.911]} />
          <div className="ml-[28px] flex">
            {["><", "<>", "<<", ">>"].map((t) => (
              <div key={t} className="w-[97.4px]"><Btn className="w-[42px] text-[#666]!">{t}</Btn></div>
            ))}
          </div>
          <Field className="w-[164px] text-[#777]">0.1</Field>
        </div>
      </div>

      <div className="mt-[5px] shrink-0 pl-[115px]"><Ruler /></div>

      <div className="mt-[7px] flex h-[290px] shrink-0 pl-[10px]">
        <div className="flex w-[97px] shrink-0 flex-col">
          <Btn caret className="mb-[3px] w-[60px]">LD</Btn>
          {([["Fragment", true], ["Cluster", true], ["Loci", false], ["2kde", true]] as [string, boolean][]).map(([t, on]) => (
            <label key={t} className="flex h-[33.7px] items-center gap-[8.5px] text-[13.5px] text-[#333]">
              <Check on={on} size={10.5} />
              <span>{t}</span>
            </label>
          ))}
        </div>
        <div className="flex w-[262px] shrink-0 flex-col pt-px">
          <span className={label}>ddmethod</span>
          <Field caret className="mt-[4px] text-[#444]">UMAP</Field>
          <Btn caret className="mt-[19px] w-[123px]">PARA_UMAP</Btn>
          <span className={label}>clumethod</span>
          <Field caret className="mt-[4px] text-[#444]">hkmeans</Field>
          <Btn caret className="mt-[19px] w-[150px]">PARA_HKMEANS</Btn>
          <span className={label}>set cluster num</span>
          <Field className="mt-[4px] text-[#777]">4</Field>
        </div>
        <div className="flex items-start pt-[6px] pl-[38px]">
          <Scatter width={345} colored={false} />
          <div className="ml-[44px]"><Scatter width={295} colored /></div>
          <div className="mt-[84px] ml-[18px] flex flex-col gap-[2.6px]">
            {[["1", "bg-[#7cc4ae]"], ["2", "bg-[#e59b68]"], ["3", "bg-[#aca5d4]"], ["4", "bg-[#f26fb5]"]].map(([t, bg]) => (
              <div key={t} className="flex h-[14px] items-center gap-[7px] text-[9.5px] text-[#111]">
                <span className={`size-[14px] rounded-full ${bg}`} />
                <span>{t}</span>
              </div>
            ))}
          </div>
        </div>
      </div>

      <div className="flex shrink-0 pl-[10px]">
        <div className="w-[105px] shrink-0"><Btn caret className="w-[59px]">2K</Btn></div>
        <div className="pt-[5px]"><Strips /></div>
      </div>
    </section>
  );
}

/* Connector arrows that run across the windows */
function Arrows() {
  return (
    <svg className="pointer-events-none absolute inset-0" width="1933" height="866">
      <g stroke="#4472c4" strokeWidth="1.2" fill="none">
        <path d="M387 341L310 305.5" />
        <path d="M388 373.5L311 428.5" />
        <path d="M799 569H692" />
      </g>
      <g fill="#4472c4">
        <path d="M304.5 303L317 303L312 313Z" />
        <path d="M304.5 433L310 422L316.5 431Z" />
        <path d="M684.5 569L695.5 563.5V574.5Z" />
      </g>
    </svg>
  );
}

export default function App() {
  return (
    <div className="relative flex h-[866px] w-[1933px] items-start overflow-hidden bg-white font-['Liberation_Sans',Arial,sans-serif]">
      <div className="flex w-[305px] shrink-0 flex-col pt-[62px]">
        <ItemWindow />
        <ParaWindow />
      </div>
      <KdeWindow />
      <MainWindow />
      <Arrows />
    </div>
  );
}
